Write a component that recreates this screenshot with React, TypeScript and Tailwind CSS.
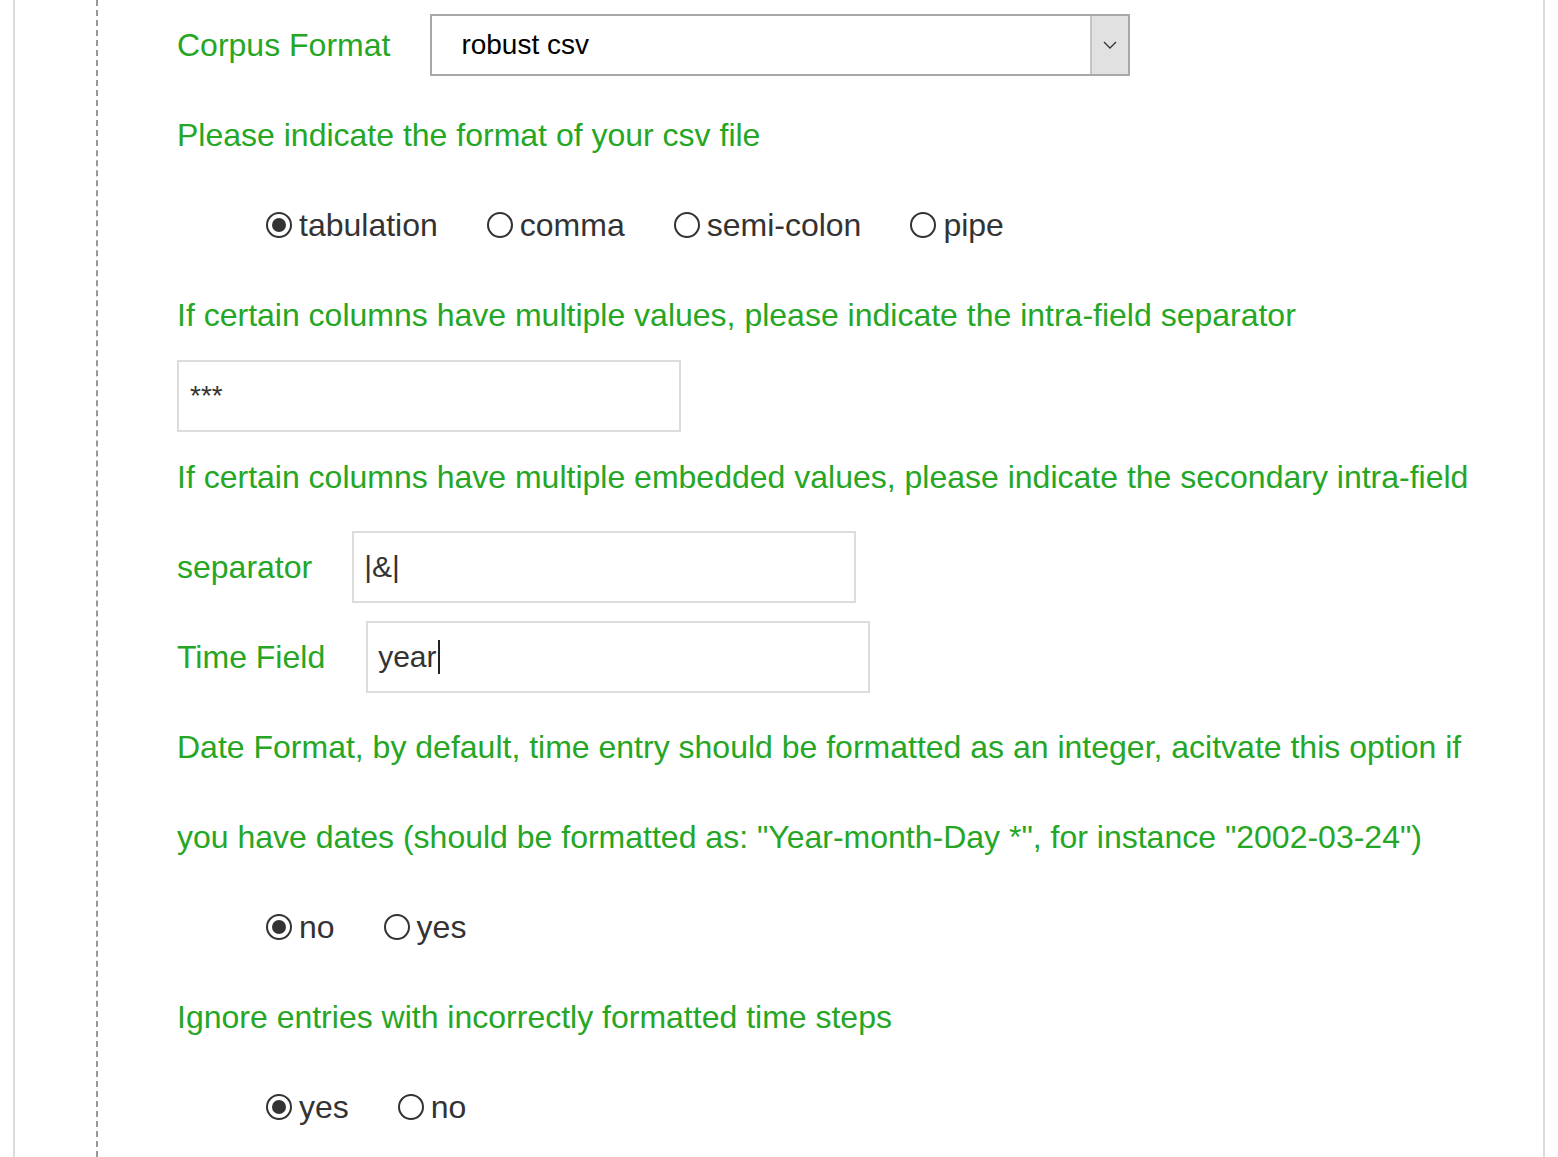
import React from "react";

const GREEN = "text-[#25a625]";

function Radio({ label, checked, first }: { label: string; checked?: boolean; first?: boolean }) {
  return (
    <span className={`flex items-center ${first ? "" : "ml-[49px]"}`}>
      <span className="mr-[7px] flex h-[26px] w-[26px] items-center justify-center rounded-full border-2 border-[#333] bg-white">
        {checked && <span className="h-[14px] w-[14px] rounded-full bg-[#333]" />}
      </span>
      <span className="text-[#333]">{label}</span>
    </span>
  );
}

function RadioRow({ items, checked }: { items: string[]; checked: number }) {
  return (
    <div className="flex h-[90px] items-center pl-[89px]">
      {items.map((it, i) => (
        <Radio key={it} label={it} checked={i === checked} first={i === 0} />
      ))}
    </div>
  );
}

function TextBox({ value, caret }: { value: string; caret?: boolean }) {
  return (
    <div className="flex h-[72px] w-[504px] items-center border-2 border-[#dcdcdc] bg-white pl-[10px]">
      <span className="text-[30px] leading-none text-[#333]">{value}</span>
      {caret && <span className="ml-[1px] h-[34px] w-[2px] bg-[#222]" />}
    </div>
  );
}

export default function App() {
  return (
    <div className="min-h-screen bg-white" style={{ fontFamily: '"Liberation Sans", Arial, sans-serif' }}>
      <div className="ml-[13px] min-h-[1157px] w-[1532px] border-x-2 border-[#dcdcdc] pl-[81px]">
        <div className="min-h-[1157px] border-l-2 border-dashed border-[#999] pl-[79px] text-[32px] leading-[90px]">
          {/* corpus format select */}
          <div className="flex h-[90px] items-center">
            <span className={`${GREEN} mr-[40px]`}>Corpus Format</span>
            <div className="flex h-[62px] w-[700px] items-stretch border-2 border-[#a8a8a8] bg-white">
              <span className="flex flex-1 items-center pl-[29px] text-[28px] leading-none text-black">robust csv</span>
              <span className="flex w-[38px] items-center justify-center border-l-2 border-[#c4c4c4] bg-[#e1e1e1]">
                <svg width="14" height="8" viewBox="0 0 14 8" fill="none">
                  <path d="M1 1 L7 7 L13 1" stroke="#333" strokeWidth="1.3" />
                </svg>
              </span>
            </div>
          </div>

          <div className={GREEN}>Please indicate the format of your csv file</div>
          <RadioRow items={["tabulation", "comma", "semi-colon", "pipe"]} checked={0} />

          <div className={GREEN}>If certain columns have multiple values, please indicate the intra-field separator</div>
          <div className="flex h-[72px] w-[504px] items-center border-2 border-[#dcdcdc] bg-white pl-[11px]">
            <span className="text-[28px] leading-none text-[#333]">***</span>
          </div>

          <div className={`${GREEN} whitespace-nowrap`}>
            If certain columns have multiple embedded values, please indicate the secondary intra-field
          </div>
          <div className="flex h-[90px] items-center">
            <span className={`${GREEN} mr-[40px]`}>separator</span>
            <TextBox value="|&|" />
          </div>

          <div className="flex h-[90px] items-center">
            <span className={`${GREEN} mr-[41px]`}>Time Field</span>
            <TextBox value="year" caret />
          </div>

          <div className={`${GREEN} whitespace-nowrap`}>
            Date Format, by default, time entry should be formatted as an integer, acitvate this option if
          </div>
          <div className={`${GREEN} whitespace-nowrap`}>
            you have dates (should be formatted as: "Year-month-Day *", for instance "2002-03-24")
          </div>
          <RadioRow items={["no", "yes"]} checked={0} />

          <div className={GREEN}>Ignore entries with incorrectly formatted time steps</div>
          <RadioRow items={["yes", "no"]} checked={0} />
        </div>
      </div>
    </div>
  );
}
